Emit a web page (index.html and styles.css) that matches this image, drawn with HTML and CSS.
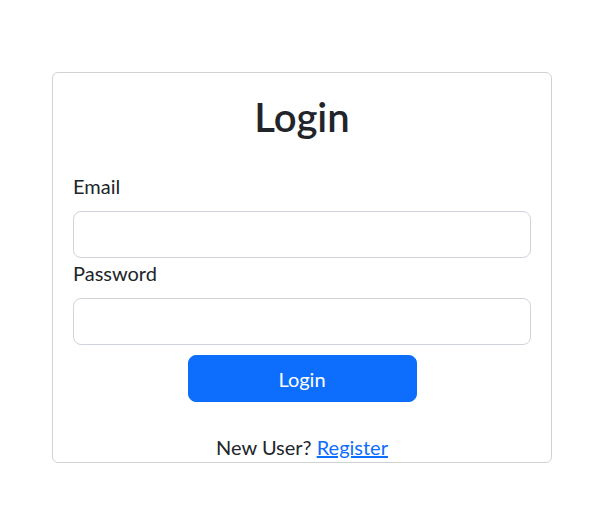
FILE: index.html
```html
<!DOCTYPE html>
<html lang="en">
<head>
<meta charset="utf-8">
<title>Login</title>
<link rel="stylesheet" href="styles.css">
</head>
<body>
  <div class="card">
    <h1 class="title">Login</h1>
    <form class="form">
      <label class="label" for="email">Email</label>
      <input class="input" id="email" type="email">
      <label class="label" for="password">Password</label>
      <input class="input" id="password" type="password">
      <button class="btn" type="button">Login</button>
    </form>
    <p class="footer">New User? <a class="link" href="#">Register</a></p>
  </div>
</body>
</html>
```
FILE: styles.css
```css
* { box-sizing: border-box; }
body {
  margin: 0;
  background: #fff;
  color: #212529;
  font-family: Lato, "Liberation Sans", sans-serif;
  font-size: 20px;
  line-height: 30px;
}
.card {
  width: 500px;
  height: 391px;
  margin: 72px 0 0 52px;
  padding: 20px 20px 0;
  border: 1px solid rgba(0, 0, 0, 0.175);
  border-radius: 6px;
  display: flex;
  flex-direction: column;
}
.title {
  margin: 0 0 30px;
  font-size: 40px;
  line-height: 48px;
  font-weight: 600;
  text-align: center;
}
.form {
  display: flex;
  flex-direction: column;
}
.label {
  display: block;
  font-size: 20px;
  line-height: 30px;
  margin-bottom: 10px;
}
.input {
  display: block;
  width: 100%;
  height: 47px;
  padding: 8px 16px;
  font: inherit;
  border: 1px solid #ced4da;
  border-radius: 8px;
  background: #fff;
  outline: none;
}
.btn {
  align-self: center;
  width: 50%;
  height: 47px;
  margin-top: 10px;
  padding: 8px 16px;
  font: inherit;
  color: #fff;
  background: #0d6efd;
  border: 1px solid #0d6efd;
  border-radius: 8px;
  cursor: pointer;
}
.footer {
  margin: 30px 0 0;
  text-align: center;
  line-height: 30px;
}
.link {
  color: #0d6efd;
  text-decoration: underline;
}
```
